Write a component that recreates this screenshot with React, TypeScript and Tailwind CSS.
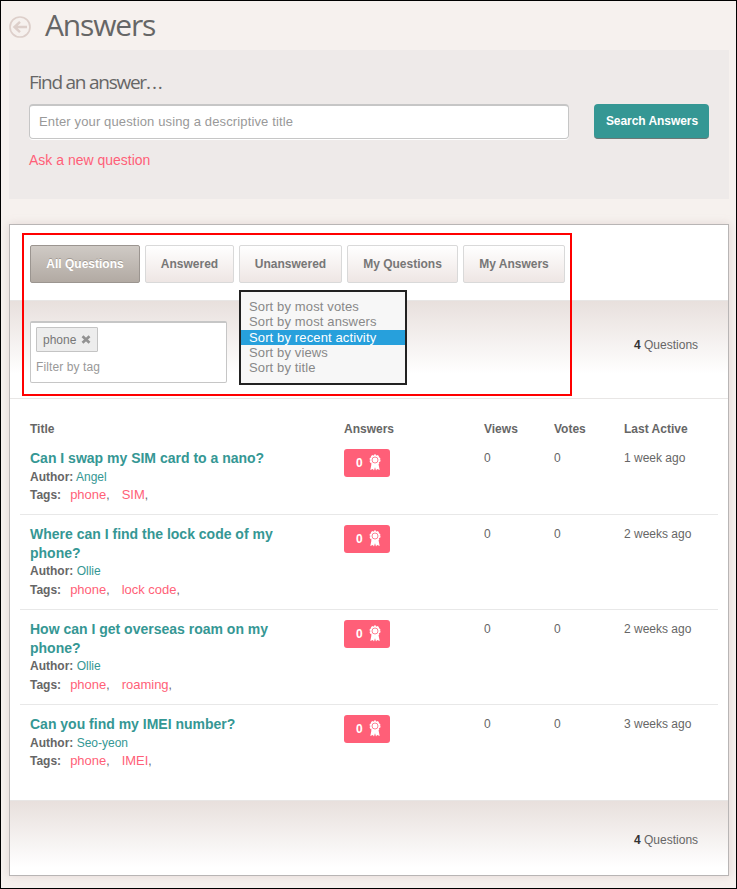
import React from "react";

const tabs = [
  { label: "All Questions", width: "w-[110px]", active: true },
  { label: "Answered", width: "w-[89px]" },
  { label: "Unanswered", width: "w-[103px]" },
  { label: "My Questions", width: "w-[111px]" },
  { label: "My Answers", width: "w-[102px]" },
];

const sorts = [
  "Sort by most votes",
  "Sort by most answers",
  "Sort by recent activity",
  "Sort by views",
  "Sort by title",
];

const questions = [
  { title: "Can I swap my SIM card to a nano?", author: "Angel", tag: "SIM", active: "1 week ago", height: "h-[76px]" },
  { title: "Where can I find the lock code of my phone?", author: "Ollie", tag: "lock code", active: "2 weeks ago", height: "h-[95px]" },
  { title: "How can I get overseas roam on my phone?", author: "Ollie", tag: "roaming", active: "2 weeks ago", height: "h-[95px]" },
  { title: "Can you find my IMEI number?", author: "Seo-yeon", tag: "IMEI", active: "3 weeks ago", height: "h-[96px]" },
];

const columns = "grid grid-cols-[314px_140px_70px_70px_1fr] pl-[10px]";

function Ribbon() {
  return (
    <svg width="12" height="17" viewBox="0 0 12 17" className="mb-[2px] ml-[6px] shrink-0">
      <path d="M2.6 9.5 1.3 16l2.5-1.1L5 16.6 6 13.2l1 3.4 1.2-1.7 2.5 1.1-1.3-6.5z" fill="#fff" />
      <circle cx="6" cy="6" r="4.8" fill="#fff" stroke="#fff" strokeWidth="1.4" strokeDasharray="1.9 1.11" />
      <circle cx="6" cy="6" r="3" fill="none" stroke="#ff5f78" strokeWidth="0.8" />
    </svg>
  );
}

function Count() {
  return (
    <div className="w-[94px] text-[12px] leading-[16px] text-[#666]">
      <b className="text-[#333]">4</b> Questions
    </div>
  );
}

export default function App() {
  return (
    <div className="h-[889px] w-[737px] overflow-hidden border border-black bg-[#f6f1ee] px-2 font-['Liberation_Sans',Arial,sans-serif] text-[#666]">
      <header className="flex h-[49px] items-center">
        <svg width="22" height="22" viewBox="0 0 22 22" fill="none" stroke="#ddcfca" className="mt-[3px]">
          <circle cx="11" cy="11" r="10" strokeWidth="1.7" />
          <path d="M18 11H6M11 5.8 5.5 11l5.5 5.2" strokeWidth="2.5" />
        </svg>
        <h1 className="mt-[-2px] ml-[14px] font-['Open_Sans',sans-serif] text-[30px] leading-[40px] font-normal tracking-[-1.15px] text-[#666]">Answers</h1>
      </header>

      <section className="h-[149px] w-[720px] bg-[#eeeae9] px-5 pt-[19px]">
        <h2 className="h-[35px] font-['Open_Sans',sans-serif] text-[19px] leading-[26px] font-normal tracking-[-1.25px] text-[#666]">
          Find an answer<span className="tracking-[1px]">...</span>
        </h2>
        <div className="flex justify-between">
          <div className="flex h-[35px] w-[540px] items-center rounded-[4px] border border-t-2 border-[#c6c6c6] bg-white pl-[9px] text-[13px] tracking-[0.14px] text-[#999] shadow-[0_1px_0_#fff]">
            Enter your question using a descriptive title
          </div>
          <button className="h-[35px] w-[115px] rounded-[4px] border-b border-[#6c7776] bg-[#359794] pl-px text-[12px] font-bold tracking-[-0.05px] text-white">Search Answers</button>
        </div>
        <a className="mt-[12px] block text-[14px] leading-[18px] text-[#ff5f78]">Ask a new question</a>
      </section>

      <main className="relative mt-[25px] h-[652px] w-[720px] border border-[#b8b5b5] bg-white shadow-[0_0_8px_rgba(190,165,165,0.35)]">
        <nav className="flex h-[75px] gap-[5px] pt-[20px] pl-[20px]">
          {tabs.map((tab) => (
            <button
              key={tab.label}
              className={`${tab.width} h-[38px] rounded-[2px] border text-[12px] font-bold ${
                tab.active
                  ? "border-[#9b9590] bg-linear-to-b from-[#cfcac5] to-[#b2aaa3] text-white [text-shadow:0_-1px_0_#a19992]"
                  : "border-[#d9d9d9] bg-linear-to-b from-white to-[#eee6e4] text-[#777]"
              }`}
            >
              {tab.label}
            </button>
          ))}
        </nav>

        <section className="flex h-[99px] justify-between border-y border-[#e8e6e5] bg-linear-to-b from-[#e8e0dd] to-white to-75% pl-[20px]">
          <div className="mt-[20px] h-[62px] w-[197px] rounded-[2px] border border-t-2 border-[#c6c6c6] bg-white pt-[4px] pl-[5px]">
            <div className="flex h-[25px] w-[62px] items-center rounded-[1px] border border-[#c4c4c4] bg-[#ededed] pl-[6px] text-[12px] text-[#777]">
              phone
              <svg width="10" height="9" viewBox="0 0 10 9" className="ml-[5px]">
                <path d="m1.5 1.2 7 6.6m0-6.6-7 6.6" stroke="#929292" strokeWidth="2.6" />
              </svg>
            </div>
            <div className="mt-[7px] text-[12px] leading-[16px] tracking-[0.1px] text-[#999]">Filter by tag</div>
          </div>
          <div className="mt-[36px]"><Count /></div>
        </section>

        <section className="px-[10px]">
          <div className={`${columns} h-[39px] pt-[22px] text-[12px] leading-[16px] font-bold`}>
            <span>Title</span>
            <span>Answers</span>
            <span>Views</span>
            <span>Votes</span>
            <span>Last Active</span>
          </div>
          {questions.map((q, i) => (
            <article key={q.title} className={`${columns} ${q.height} border-t pt-[10px] text-[12px] leading-[18px] ${i === 0 ? "border-transparent" : "border-[#e8e8e8]"}`}>
              <div className="w-[255px]">
                <h3 className="text-[14px] leading-[18.5px] font-bold text-[#359794]">{q.title}</h3>
                <p className="leading-[18.5px]"><b>Author:</b> <a className="text-[#359794]">{q.author}</a></p>
                <p className="leading-[18px]">
                  <b>Tags:</b>
                  <a className="ml-[9px] text-[13px] text-[#ff5f78]">phone</a>,
                  <a className="ml-[12px] text-[13px] text-[#ff5f78]">{q.tag}</a>,
                </p>
              </div>
              <div>
                <span className="flex h-[28px] w-[46px] items-center rounded-[3px] bg-[#ff5f78] pl-[12px] font-bold text-white">0<Ribbon /></span>
              </div>
              <span>0</span>
              <span>0</span>
              <span>{q.active}</span>
            </article>
          ))}
        </section>

        <footer className="flex h-[75px] justify-end border-t border-[#e8e6e5] bg-linear-to-b from-[#e8e0dd] to-white to-90% pt-[31px]">
          <Count />
        </footer>

        <div className="absolute top-[8px] left-[12px] h-[163px] w-[550px] border-2 border-[#ff0000]" />
        <div className="absolute top-[65px] left-[229px] h-[95px] w-[168px] border-2 border-[#222] bg-[#f7f7f7] pt-[7px] text-[13px] leading-[15px] tracking-[0.13px] text-[#888]">
          {sorts.map((sort) => (
            <div key={sort} className={`h-[15.25px] pl-[8px] ${sort === "Sort by recent activity" ? "bg-[#27a0dc] text-white" : ""}`}>{sort}</div>
          ))}
        </div>
      </main>
    </div>
  );
}
